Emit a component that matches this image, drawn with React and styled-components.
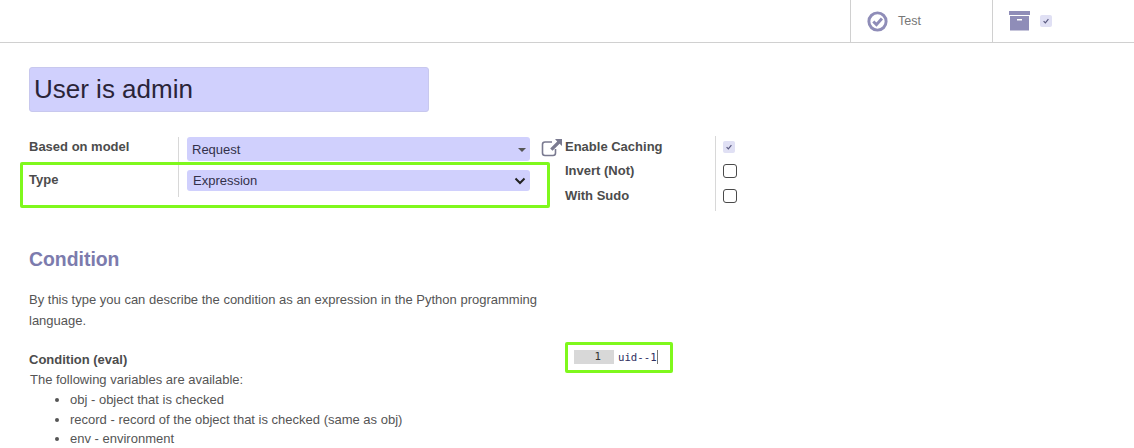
import React from 'react'
import styled, { createGlobalStyle } from 'styled-components'

const Global = createGlobalStyle`
  html, body { margin: 0; padding: 0; background: #fff; overflow: hidden; }
  body { font-family: "Liberation Sans", Arial, sans-serif; color: #555; }
`

const Page = styled.div`
  position: relative;
  width: 1134px;
  height: 448px;
  overflow: hidden;
`

const ButtonBox = styled.div`
  display: flex;
  justify-content: flex-end;
  height: 42px;
  border-bottom: 1px solid #d0d0d0;
`

const StatButton = styled.div`
  display: flex;
  align-items: center;
  gap: ${p => p.$gap}px;
  width: ${p => p.$width}px;
  box-sizing: border-box;
  padding-left: ${p => p.$pad}px;
  border-left: 1px solid #d0d0d0;
  font-size: 12.5px;
  color: #777;
`

const Sheet = styled.div`
  padding: 24px 0 0 29px;
`

const TitleInput = styled.div`
  width: 400px;
  height: 45px;
  box-sizing: border-box;
  padding-left: 4px;
  display: flex;
  align-items: center;
  background: #d0d0fd;
  border-radius: 3px;
  border: 1px solid #c8c8ee;
  font-size: 26px;
  color: #2a2438;
`

const Groups = styled.div`
  display: flex;
  margin-top: 25px;
`

const LeftGroup = styled.div`
  width: 512px;
`

const FieldRow = styled.div`
  display: flex;
  height: ${p => p.$height}px;
`

const FieldLabel = styled.div`
  width: 149px;
  flex: none;
  padding-top: ${p => p.$top}px;
  font-size: 13px;
  font-weight: bold;
  color: #4c4c4c;
`

const FieldValue = styled.div`
  flex: 1;
  border-left: 1px solid #d8d8d8;
  padding: ${p => p.$top}px 0 0 8px;
`

const Select = styled.div`
  width: 343px;
  height: ${p => p.$height}px;
  box-sizing: border-box;
  display: flex;
  align-items: center;
  justify-content: space-between;
  padding: ${p => p.$pad};
  background: #d0d0fd;
  border-radius: 3px;
  font-size: 13px;
  color: #33304a;
`

const Caret = styled.span`
  width: 0;
  height: 0;
  border-left: 4px solid transparent;
  border-right: 4px solid transparent;
  border-top: 4px solid #555;
`

const ExternalLink = styled.div`
  width: 24px;
  height: 24px;
  margin-top: 1px;
  flex: none;
`

const RightGroup = styled.div`
  display: grid;
  grid-template-columns: 150px 1fr;
  grid-template-rows: 21px 27px 27px;
  margin-top: -1px;
`

const RightLabel = styled.div`
  display: flex;
  align-items: center;
  padding-bottom: ${p => p.$bottom || 0}px;
  font-size: 13px;
  font-weight: bold;
  color: #4c4c4c;
`

const RightValue = styled.div`
  display: flex;
  align-items: center;
  padding: 0 0 ${p => p.$bottom || 0}px 7px;
  border-left: 1px solid #d8d8d8;
`

const ReadonlyCheck = styled.span`
  width: 12px;
  height: 12px;
  display: flex;
  align-items: center;
  justify-content: center;
  background: #e0e0f4;
  border-radius: 2px;
`

const Checkbox = styled.span`
  width: 12px;
  height: 12px;
  border: 1.5px solid #4a4a4a;
  border-radius: 3px;
`

const Heading = styled.h2`
  margin: 36px 0 0;
  font-size: 19.4px;
  line-height: 24px;
  font-weight: bold;
  color: #7c7bad;
`

const ConditionBody = styled.div`
  display: flex;
`

const Help = styled.div`
  width: 537px;
  flex: none;
`

const Paragraph = styled.p`
  margin: 18px 0 0;
  font-size: 13px;
  line-height: 21px;
`

const CondLabel = styled.div`
  margin-top: 19px;
  font-size: 13px;
  line-height: 20px;
  font-weight: bold;
  color: #4c4c4c;
`

const VarIntro = styled.div`
  font-size: 13px;
  line-height: 20px;
  padding-left: 1px;
`

const VarList = styled.ul`
  margin: 0;
  padding-left: 41px;
  font-size: 13px;
  line-height: 19.5px;
`

const Editor = styled.div`
  display: flex;
  align-items: center;
  height: 14px;
  margin: 79px 0 0 8px;
  font-family: "DejaVu Sans Mono", "Liberation Mono", monospace;
  font-size: 10.7px;
  color: #2f2f5f;
`

const Gutter = styled.span`
  width: 40px;
  height: 14px;
  box-sizing: border-box;
  padding-right: 13px;
  margin-right: 4px;
  line-height: 14px;
  text-align: right;
  background: #d8d8d8;
  color: #333;
`

const Cursor = styled.span`
  width: 1px;
  height: 14px;
  background: #777;
`

const Highlight = styled.div`
  position: absolute;
  box-sizing: border-box;
  left: ${p => p.$x}px;
  top: ${p => p.$y}px;
  width: ${p => p.$w}px;
  height: ${p => p.$h}px;
  border: 3px solid #7ff81c;
  border-radius: 2px;
  pointer-events: none;
`

const TickIcon = () => (
  <svg width="8" height="8" viewBox="0 0 10 10">
    <path d="M2 5.2 L4.2 7.4 L8 2.8" fill="none" stroke="#5a5a80" strokeWidth="1.5" />
  </svg>
)

const App = () => (
  <Page>
    <Global />
    <ButtonBox>
      <StatButton $width={142} $pad={16} $gap={10}>
        <svg width="21" height="21" viewBox="0 0 20 20">
          <circle cx="10" cy="10" r="8.2" fill="none" stroke="#8f8db8" strokeWidth="2.8" />
          <path d="M6 10 L9 13 L14.2 7.2" fill="none" stroke="#8f8db8" strokeWidth="2.8" />
        </svg>
        Test
      </StatButton>
      <StatButton $width={142} $pad={16} $gap={10}>
        <svg width="21" height="20" viewBox="0 0 21 20">
          <rect x="0" y="0" width="21" height="4" fill="#8f8db8" />
          <rect x="1" y="5" width="19" height="14.5" fill="#8f8db8" />
          <rect x="8" y="8" width="5" height="1.5" fill="#fff" />
        </svg>
        <ReadonlyCheck><TickIcon /></ReadonlyCheck>
      </StatButton>
    </ButtonBox>
    <Sheet>
      <TitleInput>User is admin</TitleInput>
      <Groups>
        <LeftGroup>
          <FieldRow $height={25}>
            <FieldLabel $top={2}>Based on model</FieldLabel>
            <FieldValue $top={0}>
              <Select $height={24} $pad="1px 4px 0 5px">Request<Caret /></Select>
            </FieldValue>
          </FieldRow>
          <FieldRow $height={35}>
            <FieldLabel $top={10}>Type</FieldLabel>
            <FieldValue $top={8}>
              <Select $height={21} $pad="0 4px 0 6px">
                Expression
                <svg width="12" height="8" viewBox="0 0 12 8">
                  <path d="M1.5 1.5 L6 6 L10.5 1.5" fill="none" stroke="#222" strokeWidth="2" />
                </svg>
              </Select>
            </FieldValue>
          </FieldRow>
        </LeftGroup>
        <ExternalLink>
          <svg width="22" height="20" viewBox="0 0 22 20">
            <path d="M11 4 H4 Q1.5 4 1.5 6.5 V15 Q1.5 17.5 4 17.5 H12 Q14.5 17.5 14.5 15 V11" fill="none" stroke="#7a7a90" strokeWidth="1.6" />
            <path d="M14 1 H21 V8 L18.6 5.8 L11.5 12.8 L9.2 10.5 L16.2 3.4 Z" fill="#7a7a90" />
          </svg>
        </ExternalLink>
        <RightGroup>
          <RightLabel>Enable Caching</RightLabel>
          <RightValue><ReadonlyCheck><TickIcon /></ReadonlyCheck></RightValue>
          <RightLabel>Invert (Not)</RightLabel>
          <RightValue><Checkbox /></RightValue>
          <RightLabel $bottom={4}>With Sudo</RightLabel>
          <RightValue $bottom={4}><Checkbox /></RightValue>
        </RightGroup>
      </Groups>
      <Heading>Condition</Heading>
      <ConditionBody>
        <Help>
          <Paragraph>By this type you can describe the condition as an expression in the Python programming language.</Paragraph>
          <CondLabel>Condition (eval)</CondLabel>
          <VarIntro>The following variables are available:</VarIntro>
          <VarList>
            <li>obj - object that is checked</li>
            <li>record - record of the object that is checked (same as obj)</li>
            <li>env - environment</li>
          </VarList>
        </Help>
        <Editor>
          <Gutter>1</Gutter>
          uid--1
          <Cursor />
        </Editor>
      </ConditionBody>
    </Sheet>
    <Highlight $x={20} $y={162} $w={530} $h={46} />
    <Highlight $x={565} $y={342} $w={108} $h={31} />
  </Page>
)

export default App
